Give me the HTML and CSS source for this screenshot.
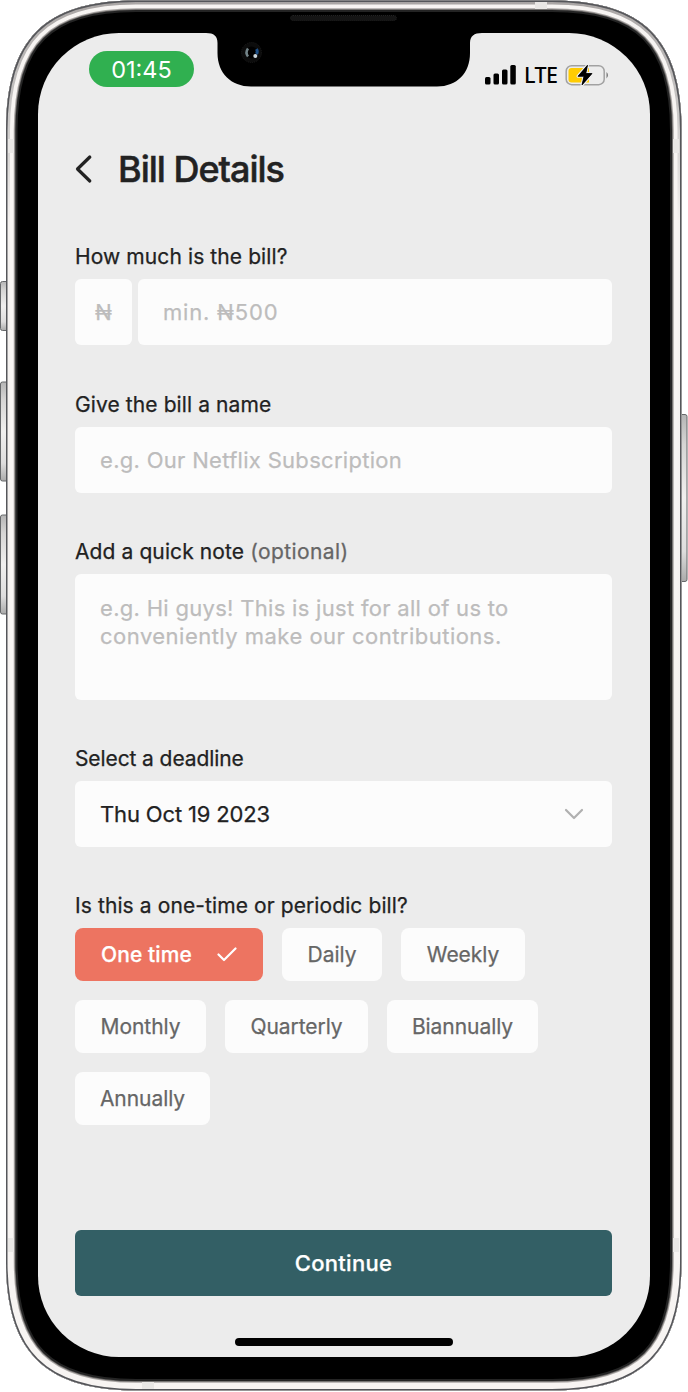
FILE: index.html
```html
<!DOCTYPE html>
<html lang="en">
<head>
<meta charset="utf-8">
<title>Bill Details</title>
<link rel="stylesheet" href="styles.css">
</head>
<body>
<div class="phone">
  <svg class="frame" width="688" height="1392" viewBox="0 0 688 1392" aria-hidden="true">
    <defs>
      <path id="shell" d="M136 .5H552C643 .5 681.5 39 681.5 130.500V1261C681.5 1352 643 1390.500 552 1390.500H136C45 1390.500 6 1352 6 1261V130.500C6 39 45 .5 136 .5Z"/>
      <clipPath id="inside"><use href="#shell"/></clipPath>
      <linearGradient id="metal" x1="0" y1="0" x2="0" y2="1"><stop offset="0" stop-color="#a9a5a4"/><stop offset=".08" stop-color="#c9c7c6"/><stop offset=".16" stop-color="#f5f2f0"/><stop offset="1" stop-color="#f7f4f2"/></linearGradient>
      <linearGradient id="key" x1="0" y1="0" x2="0" y2="1"><stop offset="0" stop-color="#b5b5b5"/><stop offset=".18" stop-color="#d6d5d4"/><stop offset=".5" stop-color="#f0efee"/><stop offset=".82" stop-color="#dedddd"/><stop offset="1" stop-color="#aaa"/></linearGradient>
    </defs>
    <g fill="url(#key)" stroke="#66686a" stroke-width="1">
      <rect x=".5" y="281.500" width="9" height="49" rx="2"/>
      <rect x=".5" y="382" width="9" height="99" rx="2"/>
      <rect x=".5" y="515" width="9" height="99" rx="2"/>
      <rect x="678" y="414.500" width="9" height="167" rx="2"/>
    </g>
    <use href="#shell" fill="#000"/>
    <g clip-path="url(#inside)" fill="none">
      <use href="#shell" stroke="#242424" stroke-width="23"/>
      <use href="#shell" stroke="#666463" stroke-width="19"/>
      <use href="#shell" stroke="#aaa6a4" stroke-width="17.500"/>
      <use href="#shell" stroke="#f7f4f2" stroke-width="15.500"/>
      <use href="#shell" stroke="url(#metal)" stroke-width="8"/>
      <use href="#shell" stroke="#55565a" stroke-width="3"/>
    </g>
    <g fill="#e9e7e5"><rect x="535" y="2" width="12" height="7"/><rect x="142" y="1382" width="12" height="7"/><rect x="8" y="139" width="6" height="14"/><rect x="673" y="139" width="6" height="14"/><rect x="8" y="1238" width="6" height="14"/><rect x="673" y="1238" width="6" height="14"/></g>
    <rect x="290.500" y="15.500" width="106" height="5" rx="2.500" fill="#151515" stroke="#222" stroke-dasharray="1 1"/>
  </svg>

  <main class="screen">
    <svg class="notch" width="276" height="54" viewBox="0 0 276 54" aria-hidden="true">
      <path d="M0 0C8 0 11.500 3 11.500 10V20C11.500 40 25 53.500 45 53.500H231C251 53.500 264 40 264 20V10C264 3 268 0 276 0Z"/>
      <circle cx="45.500" cy="19.500" r="10" fill="#0c0c0c" stroke="#1c1c1c" stroke-dasharray="1 1"/>
      <circle cx="45.500" cy="19.500" r="6" fill="#000"/>
      <path d="M42 15.500q-3 4 0 8" fill="none" stroke="#74858a" stroke-width="2.500"/>
      <path d="M50.500 16q1.500 2.500 0 5" fill="none" stroke="#1d4f86" stroke-width="3"/>
      <circle cx="49.300" cy="23" r="2" fill="#ccd6dc"/>
    </svg>
    <div class="status">
      <span class="time">01:45</span>
      <div class="signals">
        <svg width="32" height="20" viewBox="0 0 32 20"><rect x="0" y="12" width="5.500" height="7.500" rx="1.500"/><rect x="8.500" y="8.500" width="5.500" height="11" rx="1.500"/><rect x="17" y="4.500" width="5.500" height="15" rx="1.500"/><rect x="25.300" y="0" width="5.500" height="19.500" rx="1.500"/></svg>
        <span class="lte">LTE</span>
        <svg class="battery" width="45" height="24" viewBox="0 0 45 24"><rect x="1.200" y="2.700" width="38" height="19" rx="5.500" fill="none" stroke="#a1a1a1" stroke-width="1.500"/><path d="M41.500 9q3 3.200 0 6.400Z" fill="#777"/><path d="M6.500 5H24V19.500H6.500Q3.500 19.500 3.500 16.500V8Q3.500 5 6.500 5Z" fill="#ffcc02"/><path d="M22.500 2.200L13 13.300H19L17 22L27 10.500H20.800Z" fill="#000" stroke="#ececec" stroke-width="3" paint-order="stroke" stroke-linejoin="round"/><path d="M22.500 2.200L13 13.300H19L17 22L27 10.500H20.800Z" stroke="#000" stroke-width=".7"/></svg>
      </div>
    </div>

    <header class="header">
      <svg width="18" height="30" viewBox="0 0 18 30"><path d="M14.800 3L2.500 15L14.800 27" fill="none" stroke="#222" stroke-width="3.200" stroke-linecap="round" stroke-linejoin="round"/></svg>
      <h1 class="title">Bill Details</h1>
    </header>

    <section class="field">
      <div class="label"><span class="l-amount">How much is the bill?</span></div>
      <div class="row"><div class="box currency">₦</div><div class="box grow"><span class="p-amount">min. ₦500</span></div></div>
    </section>
    <section class="field">
      <div class="label"><span class="l-name">Give the bill a name</span></div>
      <div class="box"><span class="p-name">e.g. Our Netflix Subscription</span></div>
    </section>
    <section class="field note-field">
      <div class="label"><span class="l-note">Add a quick note</span> <span class="optional">(optional)</span></div>
      <div class="box note"><span class="p-note1">e.g. Hi guys! This is just for all of us to</span><span class="p-note2">conveniently make our contributions.</span></div>
    </section>
    <section class="field">
      <div class="label"><span class="l-deadline">Select a deadline</span></div>
      <div class="box select"><span class="date">Thu Oct 19 2023</span><svg width="20" height="12" viewBox="0 0 20 12"><path d="M2 2L10 10L18 2" fill="none" stroke="#b0b0b0" stroke-width="2.200" stroke-linecap="round" stroke-linejoin="round"/></svg></div>
    </section>
    <section class="field periods">
      <div class="label"><span class="l-period">Is this a one-time or periodic bill?</span></div>
      <div class="chips">
        <div class="chip active">One time <svg width="20" height="15" viewBox="0 0 20 15"><path d="M1.500 7.500L7 13L18.500 1.500" fill="none" stroke="#fff" stroke-width="2.200" stroke-linecap="round" stroke-linejoin="round"/></svg></div>
        <div class="chip daily">Daily</div>
        <div class="chip weekly">Weekly</div>
        <div class="chip monthly">Monthly</div>
        <div class="chip quarterly">Quarterly</div>
        <div class="chip biannually">Biannually</div>
        <div class="chip annually">Annually</div>
      </div>
    </section>
    <div class="continue">Continue</div>
    <div class="home"></div>
  </main>
</div>
</body>
</html>
```
FILE: styles.css
```css
* { box-sizing: border-box; }
body { margin: 0; background: #fff; font-family: Inter, "Liberation Sans", sans-serif; }
.phone { position: relative; width: 688px; height: 1392px; padding: 33px 38px 35px; }
.frame { position: absolute; inset: 0; }
.screen { position: relative; display: flex; flex-direction: column; width: 612px; height: 1324px; padding: 0 38px 0 37px; border-radius: 81px; background: #ececec; color: #222; }
.notch { position: absolute; left: 168px; top: 0; }
svg { display: block; flex: none; }
.status { display: flex; justify-content: space-between; margin: 18px 2px 0 14px; }
.time { width: 105px; height: 36px; border-radius: 18px; background: #30b050; color: #fff; font-size: 23.5px; line-height: 38px; text-align: center; }
.signals { display: flex; align-items: center; height: 48px; }
.lte { width: 32px; margin: 0 9px 0 7px; color: #000; font: 500 21.5px/24px "Noto Sans", sans-serif; letter-spacing: -.6px; }
.header { display: flex; align-items: center; height: 48px; margin-top: 46px; }
.title { margin: 0 0 0 25px; font-size: 36px; font-weight: 500; line-height: 48px; letter-spacing: -1px; -webkit-text-stroke: .5px currentColor; }
.header + .field { margin-top: 49px; }
.field { height: 147.500px; flex: none; font-size: 21px; }
.label, .box, .chip { -webkit-text-stroke: .25px currentColor; }
.label { height: 37px; padding-top: 1px; line-height: 28px; white-space: pre; font-weight: 400; letter-spacing: .1px; }
.l-deadline { letter-spacing: -.1px; }
.optional { color: #666; letter-spacing: .4px; }
.row { display: flex; gap: 6px; }
.box { display: flex; align-items: center; height: 66px; padding: 0 25px; border-radius: 6px; background: #fcfcfc; color: #bdbcbc; font-size: 22px; font-weight: 400; letter-spacing: .3px; white-space: nowrap; }
.currency { width: 57px; justify-content: center; padding: 0; }
.grow { flex: 1; }
.p-amount { letter-spacing: .8px; }
.p-note2 { letter-spacing: .48px; }
.note-field { height: 206.800px; }
.note { flex-direction: column; align-items: flex-start; height: 125.500px; padding-top: 20px; line-height: 28px; }
.select { justify-content: space-between; padding-right: 28px; color: #222; letter-spacing: -.15px; }
.periods { height: 325px; }
.periods .label { height: 36.600px; }
.chips { display: flex; flex-wrap: wrap; gap: 19px; }
.chip { display: flex; align-items: center; justify-content: center; width: 100px; height: 53px; padding-top: 1px; border-radius: 8px; background: #fcfcfc; color: #666; font-size: 21px; font-weight: 400; letter-spacing: -.05px; }
.active { width: 188px; gap: 25px; background: #ed7461; color: #fff; font-weight: 500; letter-spacing: .1px; }
.weekly { width: 124px; }
.monthly { width: 131px; }
.quarterly { width: 143px; }
.biannually { width: 151px; }
.annually { width: 135px; }
.continue { height: 66px; margin-top: 13.300px; border-radius: 6px; background: #335f65; color: #fff; font-size: 22px; font-weight: 500; line-height: 67px; letter-spacing: .3px; text-align: center; -webkit-text-stroke: .25px currentColor; }
.home { width: 218px; height: 8px; margin: 42px 0 0 160px; border-radius: 4px; background: #000; }
```
